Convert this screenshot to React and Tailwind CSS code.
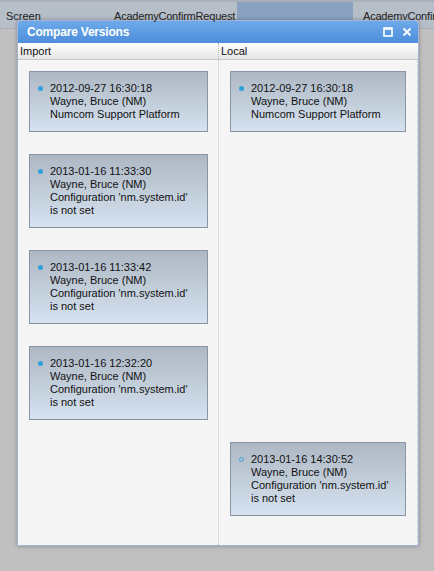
import React from 'react'

const importItems = [
  { date: '2012-09-27 16:30:18', lines: ['Numcom Support Platform'], top: 'mt-[11px]' },
  { date: '2013-01-16 11:33:30', lines: ["Configuration 'nm.system.id'", 'is not set'], top: 'mt-[22px]' },
  { date: '2013-01-16 11:33:42', lines: ["Configuration 'nm.system.id'", 'is not set'], top: 'mt-[22px]' },
  { date: '2013-01-16 12:32:20', lines: ["Configuration 'nm.system.id'", 'is not set'], top: 'mt-[22px]' },
]

function Card({ date, lines, hollow, className = '' }) {
  return (
    <div className={`relative border border-[#8a95a4] bg-gradient-to-b from-[#aeb8c4] to-[#d6e2f0] pl-[20px] pr-2 pt-[10px] pb-[10px] text-[11px] leading-[13px] text-[#111] ${className}`}>
      <span
        className={`absolute left-[8px] top-[14px] h-[5px] w-[5px] rounded-full ${hollow ? 'border border-[#3aa6dc]' : 'bg-[#2ea0da]'}`}
      />
      <p>{date}</p>
      <p>Wayne, Bruce (NM)</p>
      {lines.map(l => <p key={l}>{l}</p>)}
    </div>
  )
}

export default function App() {
  return (
    <div className="relative h-[571px] w-[434px] overflow-hidden bg-[#c0c0c0] font-['Liberation_Sans',Arial,sans-serif]">
      {/* tab strip behind the dialog */}
      <div className="flex h-[28px] whitespace-nowrap border-t-2 border-[#a9b0b8] bg-[#b6bec8] text-[11px] text-[#222]">
        <span className="w-[108px] shrink-0 pl-[6px] pt-[6px]">Screen</span>
        <span className="relative z-10 w-[129px] shrink-0 pl-[6px] pt-[6px] tracking-[-0.2px]">AcademyConfirmRequest</span>
        <span className="w-[116px] shrink-0 bg-[#8aa2bf]" />
        <span className="shrink-0 pl-[10px] pt-[6px] tracking-[-0.2px]">AcademyConfirm</span>
      </div>
      <div className="border-t border-dotted border-[#9aa0a6]" />

      {/* dialog window */}
      <div className="absolute left-[17px] top-[20px] flex h-[526px] w-[402px] flex-col overflow-hidden rounded-t-[4px] border border-[#a4b4d6] bg-[#f5f5f5] shadow-[0_0_4px_rgba(0,0,0,0.3)]">
        <div className="flex h-[22px] shrink-0 items-center bg-gradient-to-b from-[#6eaaea] to-[#4d8ddb] pl-[9px] pr-[6px] text-white">
          <span className="flex-1 text-[12px] font-bold tracking-[-0.2px]">Compare Versions</span>
          <svg width="10" height="10" viewBox="0 0 10 10" className="mr-[9px]">
            <rect x="1" y="1" width="8" height="8" fill="none" stroke="white" strokeWidth="1.6" />
            <line x1="1" y1="2" x2="9" y2="2" stroke="white" strokeWidth="1.6" />
          </svg>
          <svg width="10" height="10" viewBox="0 0 10 10">
            <path d="M1.5 1.5 L8.5 8.5 M8.5 1.5 L1.5 8.5" stroke="white" strokeWidth="1.8" />
          </svg>
        </div>

        <div className="grid h-[17px] shrink-0 grid-cols-[201px_1fr] border-b border-[#c8c8c8] bg-gradient-to-b from-white to-[#e6e6e6] text-[11px] leading-[16px] text-[#111]">
          <span className="border-r border-dotted border-[#b8b8b8] pl-[2px]">Import</span>
          <span className="pl-[2px]">Local</span>
        </div>

        <div className="grid flex-1 grid-cols-[201px_199px]">
          <div className="flex flex-col border-r border-dotted border-[#c0c0c0] pl-[11px] pr-[10px]">
            {importItems.map(it => (
              <Card key={it.date} date={it.date} lines={it.lines} className={it.top} />
            ))}
          </div>
          <div className="flex flex-col border-r border-dotted border-[#c0c0c0] pl-[11px] pr-[11px]">
            <Card date="2012-09-27 16:30:18" lines={['Numcom Support Platform']} className="mt-[11px]" />
            <Card
              date="2013-01-16 14:30:52"
              lines={["Configuration 'nm.system.id'", 'is not set']}
              hollow
              className="mt-[310px]"
            />
          </div>
        </div>
      </div>
    </div>
  )
}
